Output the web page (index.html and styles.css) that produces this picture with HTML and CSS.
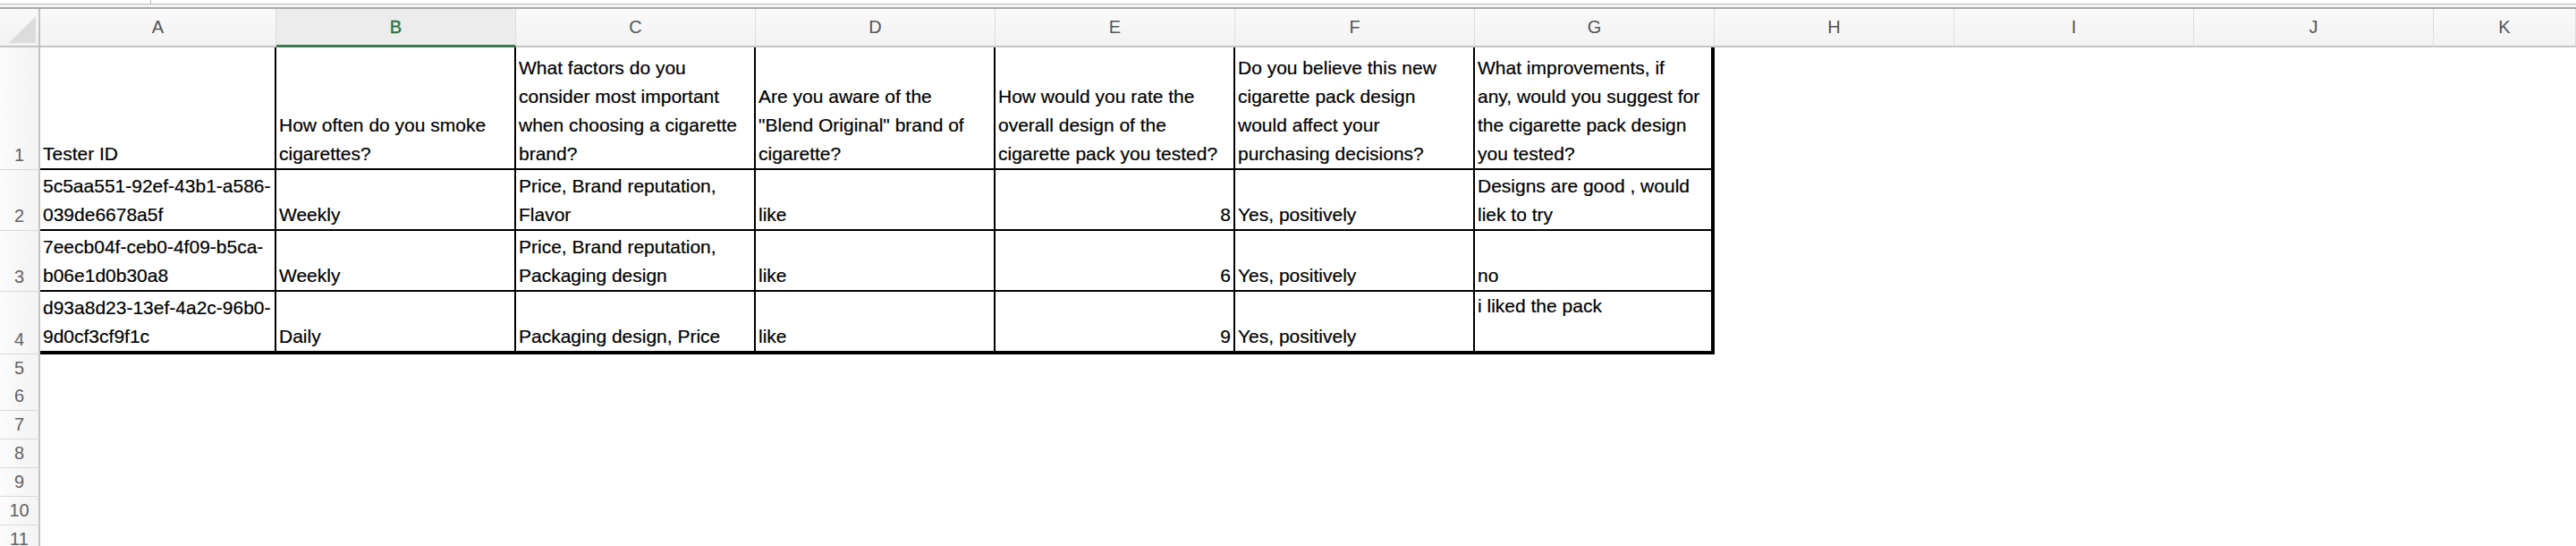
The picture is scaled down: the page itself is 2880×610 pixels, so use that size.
FILE: index.html
```html
<!DOCTYPE html>
<html lang="en">
<head>
<meta charset="utf-8">
<title>Sheet</title>
<link rel="stylesheet" href="styles.css">
</head>
<body>
<div class="topbar">
  <div class="strip"><div class="namebox"></div></div>
</div>
<div class="sheet">
  <div class="row colhdr">
    <div class="corner"><span class="tri"></span></div>
    <div class="ch">A</div>
    <div class="ch sel">B</div>
    <div class="ch">C</div>
    <div class="ch">D</div>
    <div class="ch">E</div>
    <div class="ch">F</div>
    <div class="ch">G</div>
    <div class="ch">H</div>
    <div class="ch">I</div>
    <div class="ch">J</div>
    <div class="ch">K</div>
  </div>

  <div class="row r1">
    <div class="rh">1</div>
    <div class="c"><div>Tester ID</div></div>
    <div class="c"><div>How often do you smoke<br>cigarettes?</div></div>
    <div class="c"><div>What factors do you<br>consider most important<br>when choosing a cigarette<br>brand?</div></div>
    <div class="c"><div>Are you aware of the<br>"Blend Original" brand of<br>cigarette?</div></div>
    <div class="c"><div>How would you rate the<br>overall design of the<br>cigarette pack you tested?</div></div>
    <div class="c"><div>Do you believe this new<br>cigarette pack design<br>would affect your<br>purchasing decisions?</div></div>
    <div class="c g"><div>What improvements, if<br>any, would you suggest for<br>the cigarette pack design<br>you tested?</div></div>
  </div>

  <div class="row r2">
    <div class="rh">2</div>
    <div class="c"><div>5c5aa551-92ef-43b1-a586-<br>039de6678a5f</div></div>
    <div class="c"><div>Weekly</div></div>
    <div class="c"><div>Price, Brand reputation,<br>Flavor</div></div>
    <div class="c"><div>like</div></div>
    <div class="c num"><div>8</div></div>
    <div class="c"><div>Yes, positively</div></div>
    <div class="c g"><div>Designs are good , would<br>liek to try</div></div>
  </div>

  <div class="row r3">
    <div class="rh">3</div>
    <div class="c"><div>7eecb04f-ceb0-4f09-b5ca-<br>b06e1d0b30a8</div></div>
    <div class="c"><div>Weekly</div></div>
    <div class="c"><div>Price, Brand reputation,<br>Packaging design</div></div>
    <div class="c"><div>like</div></div>
    <div class="c num"><div>6</div></div>
    <div class="c"><div>Yes, positively</div></div>
    <div class="c g"><div>no</div></div>
  </div>

  <div class="row r4">
    <div class="rh">4</div>
    <div class="c"><div>d93a8d23-13ef-4a2c-96b0-<br>9d0cf3cf9f1c</div></div>
    <div class="c"><div>Daily</div></div>
    <div class="c"><div>Packaging design, Price</div></div>
    <div class="c"><div>like</div></div>
    <div class="c num"><div>9</div></div>
    <div class="c"><div>Yes, positively</div></div>
    <div class="c g top"><div>i liked the pack</div></div>
  </div>

  <div class="row r5"><div class="rh">5</div></div>
  <div class="row rs"><div class="rh">6</div></div>
  <div class="row rs"><div class="rh">7</div></div>
  <div class="row rs"><div class="rh">8</div></div>
  <div class="row rs"><div class="rh">9</div></div>
  <div class="row rs"><div class="rh">10</div></div>
  <div class="row rs"><div class="rh">11</div></div>
</div>
</body>
</html>
```
FILE: styles.css
```css
html, body {
  margin: 0;
  padding: 0;
  background: #ffffff;
}

body {
  width: 2880px;
  height: 610px;
  overflow: hidden;
  font-family: "Liberation Sans", Arial, sans-serif;
  color: #000;
}

.topbar {
  height: 10px;
  box-sizing: border-box;
  background: #f3f3f3;
  border-bottom: 2px solid #a9a9a9;
}

.topbar .strip {
  height: 5px;
  box-sizing: border-box;
  background: #ffffff;
  border-bottom: 1px solid #b8b8b8;
  display: flex;
}

.namebox {
  width: 169px;
  box-sizing: border-box;
  border-right: 1px solid #bdbdbd;
}

.row {
  display: grid;
  grid-template-columns: 45px 264px repeat(9, 268px) 1fr;
}

/* column header */
.colhdr {
  height: 43px;
}

.corner {
  box-sizing: border-box;
  border-right: 2px solid #c2c2c2;
  border-bottom: 2px solid #c4c4c4;
  background: linear-gradient(#f8f8f8, #f2f2f2);
  display: flex;
  align-items: flex-end;
  justify-content: flex-end;
  padding: 0 3px 3px 0;
}

.tri {
  display: block;
  width: 30px;
  height: 30px;
  background: #dcdcdc;
  clip-path: polygon(100% 0, 100% 100%, 0 100%);
}

.ch {
  box-sizing: border-box;
  border-right: 1px solid #dddddd;
  border-bottom: 2px solid #c4c4c4;
  background: linear-gradient(#f9f9f9, #f3f3f3);
  display: flex;
  align-items: center;
  justify-content: center;
  font-size: 20px;
  color: #555555;
}

.ch.sel {
  background: #ececec;
  color: #2f7346;
  border-bottom: 3px solid #3b7a4f;
  padding-top: 1px;
  -webkit-text-stroke: 0.4px #2f7346;
}

/* row header */
.rh {
  box-sizing: border-box;
  border-right: 2px solid #c2c2c2;
  border-bottom: 1px solid #dadada;
  background: linear-gradient(to right, #fcfcfc, #f3f3f3);
  display: flex;
  align-items: flex-end;
  justify-content: center;
  font-size: 20px;
  line-height: 31px;
  color: #626262;
}

/* data cells */
.c {
  box-sizing: border-box;
  border-right: 2px solid #000;
  border-bottom: 2px solid #000;
  display: flex;
  align-items: flex-end;
  padding: 0 3px;
  font-size: 21px;
  line-height: 32px;
  white-space: nowrap;
  overflow: hidden;
  -webkit-text-stroke: 0.2px #000;
}

.c.g {
  border-right-width: 4px;
}

.c.num {
  justify-content: flex-end;
}

.c.top {
  align-items: flex-start;
}

.r1 { height: 137px; }
.r2, .r3 { height: 68px; }
.r4 { height: 70px; }
.r4 .c { border-bottom-width: 4px; }
.r5 { height: 31px; }
.rs { height: 32px; }
```
